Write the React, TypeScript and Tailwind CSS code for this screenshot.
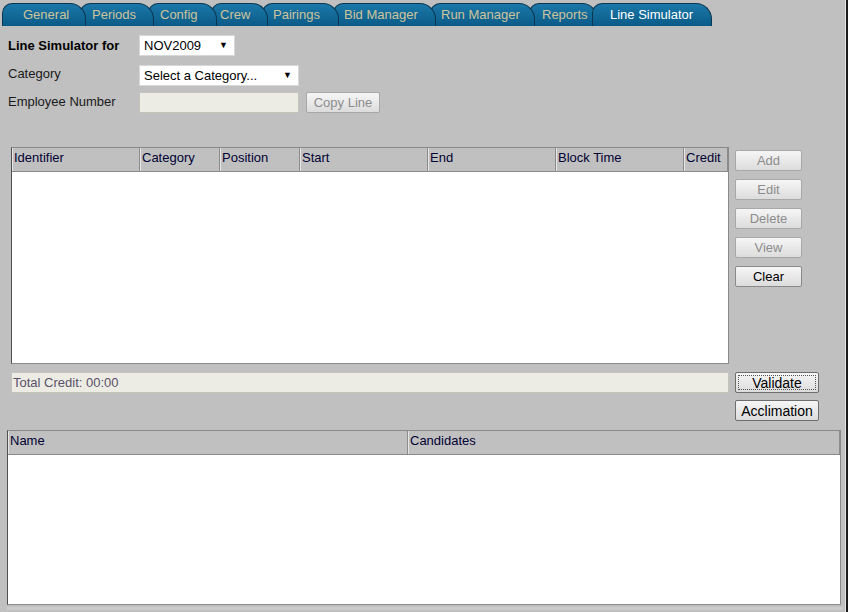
import React from 'react';

type Tab = { label: string; w: string; pl: string; z: string; active?: boolean };

const tabs: Tab[] = [
  { label: 'General', w: 'w-[84px]', pl: 'pl-[20px]', z: 'z-[9]' },
  { label: 'Periods', w: 'w-[74px]', pl: 'pl-[11px]', z: 'z-[8]' },
  { label: 'Config', w: 'w-[69px]', pl: 'pl-[11px]', z: 'z-[7]' },
  { label: 'Crew', w: 'w-[57px]', pl: 'pl-[8px]', z: 'z-[6]' },
  { label: 'Pairings', w: 'w-[77px]', pl: 'pl-[10px]', z: 'z-[5]' },
  { label: 'Bid Manager', w: 'w-[103px]', pl: 'pl-[10px]', z: 'z-[4]' },
  { label: 'Run Manager', w: 'w-[105px]', pl: 'pl-[10px]', z: 'z-[3]' },
  { label: 'Reports', w: 'w-[69px]', pl: 'pl-[12px]', z: 'z-[2]' },
  { label: 'Line Simulator', w: 'w-[120px]', pl: 'pl-[17px]', z: 'z-[10]', active: true },
];

const lineCols = [
  { label: 'Identifier', w: 'w-[128px]' },
  { label: 'Category', w: 'w-[80px]' },
  { label: 'Position', w: 'w-[80px]' },
  { label: 'Start', w: 'w-[128px]' },
  { label: 'End', w: 'w-[128px]' },
  { label: 'Block Time', w: 'w-[128px]' },
  { label: 'Credit', w: 'flex-1' },
];

const sideButtons = [
  { label: 'Add', disabled: true },
  { label: 'Edit', disabled: true },
  { label: 'Delete', disabled: true },
  { label: 'View', disabled: true },
  { label: 'Clear', disabled: false },
];

const HeaderCell: React.FC<{ label: string; w: string }> = ({ label, w }) => (
  <div
    className={`${w} h-full pt-[2px] pl-[1px] leading-[15px] border-l border-l-[#e6e6e6] border-r border-r-[#8c8c8c] text-[13px] text-[#000033] whitespace-nowrap overflow-hidden`}
  >
    {label}
  </div>
);

const Btn: React.FC<{ label: string; disabled?: boolean; w: string; focus?: boolean; big?: boolean }> = ({
  label,
  disabled,
  w,
  focus,
  big,
}) => (
  <button
    className={`${w} h-[21px] flex items-center justify-center rounded-[2px] border bg-gradient-to-b from-[#f6f6f6] to-[#dcdcdc] leading-none ${
      big ? 'text-[14px]' : 'text-[13px]'
    } ${
      disabled ? 'border-[#a8a8a8] text-[#8c8c8c]' : big ? 'border-[#6e6e6e] text-black' : 'border-[#8a8a8a] text-black'
    }`}
  >
    {focus ? (
      <span className="w-[calc(100%-4px)] h-[calc(100%-4px)] flex items-center justify-center border border-dotted border-[#555]">
        {label}
      </span>
    ) : (
      label
    )}
  </button>
);

const SelectBox: React.FC<{ value: string; w: string }> = ({ value, w }) => (
  <div className={`${w} h-[21px] bg-white border border-[#d8d8d8] flex items-center justify-between pl-[4px] pr-[6px] text-[13px] text-black`}>
    <span>{value}</span>
    <span className="text-[9px] leading-none">▼</span>
  </div>
);

export default function App() {
  return (
    <div
      className="w-[848px] h-[612px] bg-[#c0c0c0] border-r-2 border-r-[#1c1c1c] overflow-hidden"
      style={{ fontFamily: '"Liberation Sans", Arial, sans-serif' }}
    >
      <div className="h-full border-r border-r-[#e4e4e4]">
        {/* Tabs */}
        <div className="h-[26px] pt-[3px] pl-[2px] flex">
          {tabs.map((t, i) => (
            <div
              key={t.label}
              className={`relative ${t.z} ${t.w} ${t.pl} ${i > 0 ? '-ml-[6px]' : ''} h-[23px] flex items-center pb-[1px] rounded-tl-[10px] rounded-tr-[16px] border border-b-0 border-[#0b3550] bg-gradient-to-b from-[#1b78a8] to-[#0a5b88] text-[13px] whitespace-nowrap ${
                t.active ? 'text-white' : 'text-[#cfc39a]'
              }`}
            >
              {t.label}
            </div>
          ))}
        </div>

        {/* Form */}
        <div className="pl-[8px] pt-[9px] flex flex-col text-[13px] text-[#1a1a1a]">
          <div className="flex items-center h-[21px]">
            <span className="w-[131px] font-bold text-black">Line Simulator for</span>
            <SelectBox value="NOV2009" w="w-[96px]" />
          </div>
          <div className="flex items-center h-[21px] mt-[9px]">
            <span className="w-[131px] -mt-[4px]">Category</span>
            <SelectBox value="Select a Category..." w="w-[160px]" />
          </div>
          <div className="flex items-center h-[21px] mt-[6px]">
            <span className="w-[131px] -mt-[1px]">Employee Number</span>
            <div className="w-[160px] h-[21px] bg-[#ecece4] border border-[#c4c4bc]" />
            <div className="ml-[7px]">
              <Btn label="Copy Line" disabled w="w-[74px]" />
            </div>
          </div>
        </div>

        {/* Line table + side buttons */}
        <div className="flex pl-[11px] mt-[34px]">
          <div className="w-[718px] h-[217px] flex flex-col border border-[#8a8a8a] border-l-[#505050] bg-white">
            <div className="h-[24px] flex bg-[#c0c0c0] border-b border-b-[#8a8a8a]">
              {lineCols.map((c) => (
                <HeaderCell key={c.label} label={c.label} w={c.w} />
              ))}
            </div>
            <div className="flex-1" />
          </div>
          <div className="ml-[6px] pt-[3px] flex flex-col gap-[8px]">
            {sideButtons.map((b) => (
              <Btn key={b.label} label={b.label} disabled={b.disabled} w="w-[67px]" />
            ))}
          </div>
        </div>

        {/* Total credit + validate */}
        <div className="flex pl-[11px] mt-[8px]">
          <div className="w-[718px] h-[21px] bg-[#ecece4] border border-[#c4c4bc] flex items-center pl-[1px] text-[13px] text-[#5a5068]">
            Total Credit: 00:00
          </div>
          <div className="ml-[6px] flex flex-col gap-[7px]">
            <Btn label="Validate" focus big w="w-[84px]" />
            <Btn label="Acclimation" big w="w-[84px]" />
          </div>
        </div>

        {/* Candidates table */}
        <div className="pl-[7px] mt-[9px]">
          <div className="w-[834px] h-[175px] flex flex-col border border-[#8a8a8a] border-l-[#505050] bg-white">
            <div className="h-[24px] flex bg-[#c0c0c0] border-b border-b-[#8a8a8a]">
              <HeaderCell label="Name" w="w-[400px]" />
              <HeaderCell label="Candidates" w="flex-1" />
            </div>
            <div className="flex-1" />
          </div>
          <div className="h-[3px] mt-[2px] w-[836px] bg-[#cccccc]" />
        </div>
      </div>
    </div>
  );
}
